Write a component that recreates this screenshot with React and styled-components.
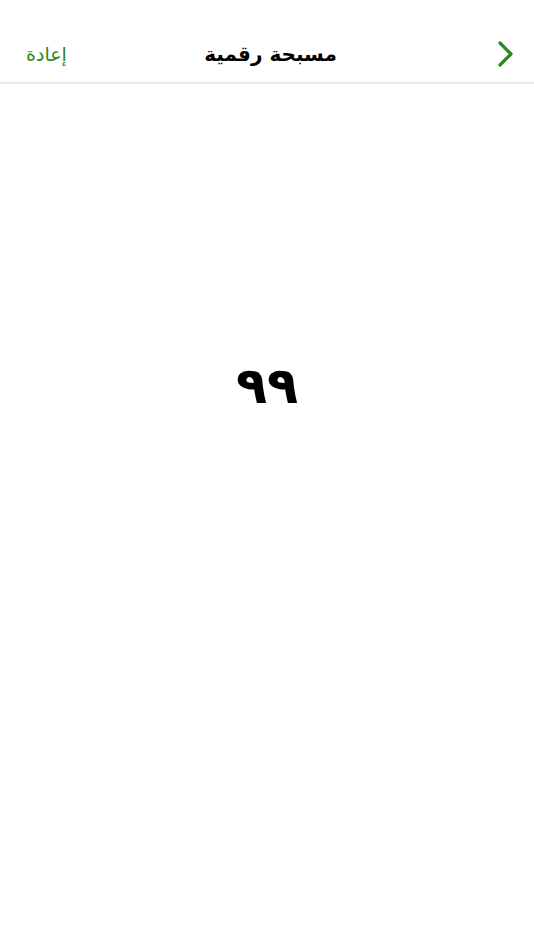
import React, { useState } from 'react'
import styled, { createGlobalStyle } from 'styled-components'

const GlobalStyle = createGlobalStyle`
  body {
    margin: 0;
    background: #fff;
    font-family: "DejaVu Sans", sans-serif;
  }
`

const Screen = styled.div`
  direction: rtl;
  min-height: 950px;
  display: flex;
  flex-direction: column;
`

const Header = styled.header`
  height: 84px;
  padding: 26px 19px 0 26px;
  box-sizing: border-box;
  display: grid;
  grid-template-columns: 1fr auto 1fr;
  align-items: center;
  border-bottom: 2px solid #ebebeb;
`

const IconButton = styled.button`
  justify-self: start;
  border: none;
  background: none;
  padding: 0;
  display: flex;
  align-items: center;
  cursor: pointer;
`

const Title = styled.h1`
  margin: 0;
  font-size: 20px;
  font-weight: bold;
  color: #000;
`

const TextButton = styled.button`
  justify-self: end;
  border: none;
  background: none;
  padding: 0;
  color: #2b8a1f;
  font-family: inherit;
  font-size: 19px;
  cursor: pointer;
`

const Body = styled.main`
  flex: 1;
  display: flex;
  justify-content: center;
  padding-top: 276px;
`

const Count = styled.div`
  font-size: 51px;
  font-weight: bold;
  color: #000;
  line-height: 1;
`

const toArabic = n => String(n).replace(/\d/g, d => '٠١٢٣٤٥٦٧٨٩'[d])

export default function App() {
  const [count, setCount] = useState(99)

  return (
    <Screen>
      <GlobalStyle />
      <Header>
        <IconButton aria-label="رجوع">
          <svg width="18" height="28" viewBox="0 0 18 28">
            <path d="M3 3 L14 14 L3 25" fill="none" stroke="#2b8a1f" strokeWidth="3.2" strokeLinecap="round" strokeLinejoin="round" />
          </svg>
        </IconButton>
        <Title>مسبحة رقمية</Title>
        <TextButton onClick={() => setCount(0)}>إعادة</TextButton>
      </Header>
      <Body onClick={() => setCount(count + 1)}>
        <Count>{toArabic(count)}</Count>
      </Body>
    </Screen>
  )
}
